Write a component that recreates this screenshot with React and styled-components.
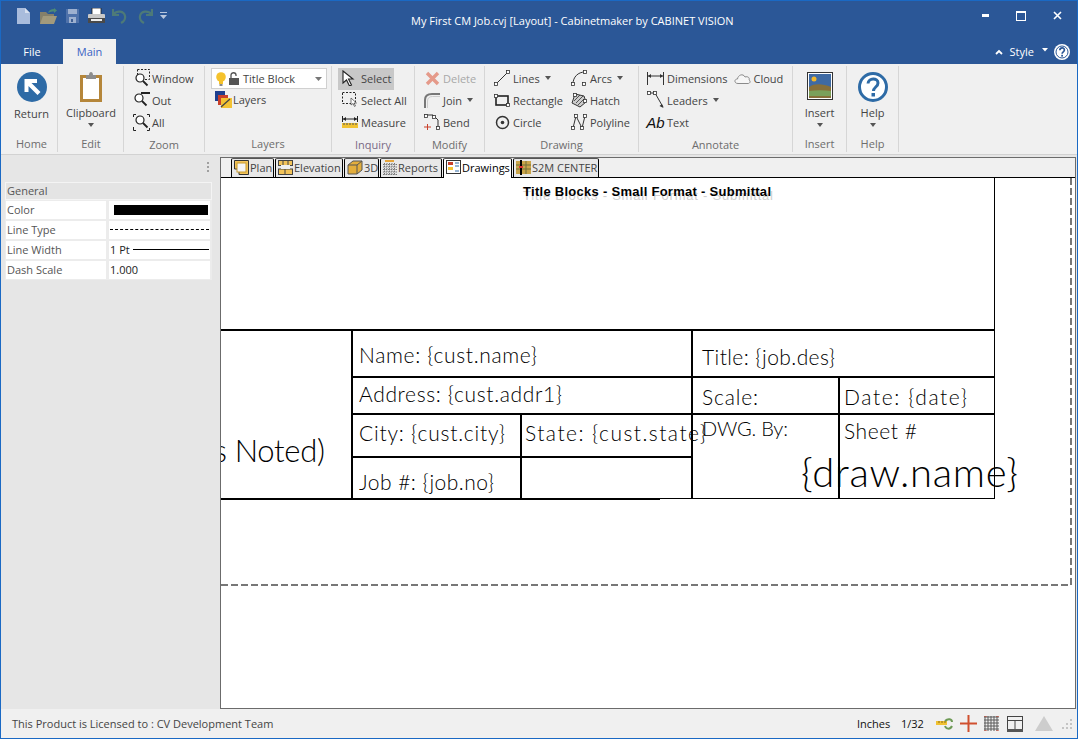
import styled, { createGlobalStyle } from "styled-components";

const GlobalStyle = createGlobalStyle`
 html, body {
  margin: 0;
  padding: 0;
  background: #f0f0f0;
 }
 * {
  box-sizing: border-box;
 }
`;

const BLUE = "#2b5797";
const ICON_BLUE = "#2e6ba6";

// ---- icons ----
const Svg = ({ w = 16, h = 16, children }) => (
 <svg width={w} height={h} viewBox={`0 0 ${w} ${h}`} fill="none" style={{ display: "block", flexShrink: 0 }}>
  {children}
 </svg>
);

const Lens = ({ x = 6, y = 10 }) => (
 <g>
  <circle cx={x} cy={y} r="4" stroke="#222" strokeWidth="1.2" fill="#fff" />
  <path d={`M${x + 3} ${y + 3}l4.5 4.5`} stroke="#222" strokeWidth="1.8" />
 </g>
);

const Node = ({ x, y }) => <rect x={x - 1.5} y={y - 1.5} width="3" height="3" fill="#fff" stroke="#333" strokeWidth="0.8" />;

const icons = {
 fileNew: (
  <Svg w={13} h={16}>
   <path d="M0 0h8l5 5v11H0z" fill="#a9bcdc" />
   <path d="M8 0l5 5H8z" fill="#d7e0ef" />
  </Svg>
 ),
 open: (
  <Svg w={17} h={16}>
   <path d="M0 4h6l2 2h6v10H0z" fill="#85806a" />
   <path d="M3 8h14l-3 8H0z" fill="#a29a7c" />
   <path d="M8 5c1-3 3-4 6-4v-1l3 2.500-3 2.500v-1.500c-2 0-4 0-6 1.500z" fill="#4d8a76" />
  </Svg>
 ),
 save: (
  <Svg w={13} h={14}>
   <rect width="13" height="14" fill="#4f72aa" />
   <rect x="2" y="0" width="9" height="5" fill="#9db0cf" />
   <rect x="3" y="8" width="7" height="6" fill="#9db0cf" />
   <rect x="5" y="10" width="2" height="3" fill="#3e5f94" />
  </Svg>
 ),
 print: (
  <Svg w={17} h={16}>
   <rect x="4" y="0" width="9" height="7" fill="#fff" stroke="#222" strokeWidth="0.8" />
   <rect x="0" y="6" width="17" height="7" rx="1" fill="#c8c8c8" />
   <rect x="0" y="10" width="17" height="5" fill="#4a4a4a" />
   <rect x="3" y="11" width="11" height="2" fill="#eee" />
  </Svg>
 ),
 undo: (
  <Svg w={15} h={16}>
   <path d="M1 1v6h6M1.500 6.500C5 2 12 3 13 8c.5 3-1 5.500-4 7" stroke="#4d7a78" strokeWidth="2.200" />
  </Svg>
 ),
 redo: (
  <Svg w={15} h={16}>
   <path d="M14 1v6H8M13.500 6.500C10 2 3 3 2 8c-.5 3 1 5.500 4 7" stroke="#4d7a78" strokeWidth="2.200" />
  </Svg>
 ),
 qatMenu: (
  <Svg w={7} h={8}>
   <path d="M0 0h7v1H0zM0 3h7L3.500 7z" fill="#b8c6dd" />
  </Svg>
 ),
 minimize: (
  <Svg w={7} h={3}>
   <rect width="7" height="3" fill="#fff" />
  </Svg>
 ),
 maximize: (
  <Svg w={10} h={10}>
   <rect x="0.500" y="0.500" width="9" height="9" stroke="#fff" />
   <rect y="0" width="10" height="2" fill="#fff" />
  </Svg>
 ),
 close: (
  <Svg w={9} h={9}>
   <path d="M1 1l7 7M8 1l-7 7" stroke="#fff" strokeWidth="1.600" />
  </Svg>
 ),
 chevronUp: (
  <Svg w={8} h={6}>
   <path d="M1 5l3-3 3 3" stroke="#fff" strokeWidth="1.800" />
  </Svg>
 ),
 caretWhite: (
  <Svg w={6} h={4}>
   <path d="M0 0h6L3 3.500z" fill="#fff" />
  </Svg>
 ),
 helpWhite: (
  <Svg w={16} h={16}>
   <circle cx="8" cy="8" r="8" fill="#fff" />
   <circle cx="8" cy="8" r="6" stroke={BLUE} strokeWidth="1" fill="#fff" />
   <path d="M5.800 6.200c.2-3 4.600-3 4.600-.2 0 1.800-2.300 1.800-2.300 3.700" stroke={BLUE} strokeWidth="1.700" />
   <rect x="7.200" y="10.800" width="1.800" height="1.800" fill={BLUE} />
  </Svg>
 ),
 returnArrow: (
  <Svg w={30} h={30}>
   <circle cx="15" cy="15" r="15" fill={ICON_BLUE} />
   <path d="M8 7h12v4h-5.500l9 9-3 3-9-9V20H7.500V7z" fill="#fff" />
  </Svg>
 ),
 clipboard: (
  <Svg w={22} h={30}>
   <rect y="3" width="22" height="27" fill="#b5863a" />
   <rect x="3" y="6" width="16" height="21" fill="#fff" />
   <path d="M6 7V3h3c0-4 4-4 4 0h3v4z" fill="#8d8d8d" />
  </Svg>
 ),
 zoomWindow: (
  <Svg w={16} h={18}>
   <rect x="3.500" y="0.500" width="12" height="10" stroke="#222" strokeDasharray="2 1.500" />
   <Lens y={9} />
  </Svg>
 ),
 zoomOut: (
  <Svg w={17} h={16}>
   <rect x="8" y="0" width="9" height="2" fill="#222" />
   <Lens y={6} />
  </Svg>
 ),
 zoomAll: (
  <Svg w={17} h={17}>
   <path d="M3 .5H.5V3M14 .5h2.500V3M.5 13v3.500H3M14 16.500h2.500V14" stroke="#222" />
   <Lens x={7} y={6} />
  </Svg>
 ),
 bulb: (
  <Svg w={10} h={14}>
   <circle cx="5" cy="5" r="4.800" fill="#f5c22c" />
   <rect x="3" y="9" width="4" height="3" fill="#f5c22c" />
   <rect x="3.500" y="12" width="3" height="2" fill="#8a8a8a" />
  </Svg>
 ),
 lock: (
  <Svg w={10} h={13}>
   <path d="M2 6V3c0-3 5-3 5 0v1" stroke="#555" strokeWidth="1.300" />
   <rect y="6" width="10" height="7" fill="#555" />
  </Svg>
 ),
 comboArrow: (
  <Svg w={7} h={4}>
   <path d="M0 0h7L3.500 4z" fill="#777" />
  </Svg>
 ),
 layers: (
  <Svg w={17} h={17}>
   <rect width="10" height="10" fill="#1f3f8f" />
   <rect x="3" y="4" width="10" height="10" fill="#c9402b" />
   <rect x="6" y="7" width="11" height="10" fill="#f3c233" />
   <path d="M6 16l9-8" stroke="#444" strokeWidth="1.400" />
  </Svg>
 ),
 select: (
  <Svg w={13} h={16}>
   <path d="M1 1l10 8H6.500l3 6-2 1-3-6L1 13z" fill="#fff" stroke="#222" strokeWidth="1.100" />
  </Svg>
 ),
 selectAll: (
  <Svg w={16} h={16}>
   <rect x="0.500" y="0.500" width="13" height="11" stroke="#222" strokeDasharray="2 1.500" />
   <path d="M9 6l5.500 5H12l1.500 3-1 .5-1.500-3L9 13z" fill="#fff" stroke="#555" strokeWidth="0.800" />
  </Svg>
 ),
 measure: (
  <Svg w={16} h={14}>
   <path d="M.5 1v6M15.500 1v6M1 4h14" stroke="#222" />
   <path d="M1 4l3-2v4zM15 4l-3-2v4z" fill="#222" />
   <rect y="8" width="16" height="5" fill="#f1c232" />
   <path d="M2 8v2M5 8v2M8 8v2M11 8v2M14 8v2" stroke="#555" />
  </Svg>
 ),
 deleteX: (
  <Svg w={15} h={15}>
   <path d="M2 2l11 11M13 2L2 13" stroke="#e59a8a" strokeWidth="3.400" />
  </Svg>
 ),
 join: (
  <Svg w={16} h={15}>
   <path d="M1 15V7C1 3 4 1 8 1h8" stroke="#777" strokeWidth="2" />
   <path d="M3.500 15V8c0-3 2-4.500 5-4.500H16" stroke="#ccc" strokeWidth="1" />
  </Svg>
 ),
 bend: (
  <Svg w={16} h={16}>
   <path d="M1 1h8l5 5 0 8" stroke="#333" />
   <Node x={2} y={2} />
   <Node x={10} y={3} />
   <Node x={14} y={14} />
   <path d="M0 13h7M3.500 10v6.500" stroke="#c9402b" />
  </Svg>
 ),
 lines: (
  <Svg w={16} h={16}>
   <path d="M2 14L14 2" stroke="#333" />
   <Node x={2} y={14} />
   <Node x={14} y={2} />
  </Svg>
 ),
 rectangle: (
  <Svg w={16} h={13}>
   <rect x="2" y="2" width="12" height="9" stroke="#222" strokeWidth="1.600" />
   <Node x={2} y={2} />
   <Node x={14} y={11} />
  </Svg>
 ),
 circle: (
  <Svg w={15} h={15}>
   <circle cx="7.500" cy="7.500" r="6" stroke="#333" strokeWidth="1.500" />
   <circle cx="7.500" cy="7.500" r="1.800" fill="#333" />
  </Svg>
 ),
 arcs: (
  <Svg w={16} h={16}>
   <path d="M2 14C2 7 7 2 14 2" stroke="#333" />
   <Node x={2} y={14} />
   <Node x={14} y={2} />
   <Node x={13} y={14} />
  </Svg>
 ),
 hatch: (
  <Svg w={16} h={15}>
   <path d="M4 1l9 2 2 6-6 5-8-4z" fill="#ccc" stroke="#333" />
   <path d="M3 8l6-6M5 10l7-7M7 12l6-6" stroke="#333" strokeWidth="0.800" />
   <Node x={4} y={2} />
   <Node x={14} y={8} />
  </Svg>
 ),
 polyline: (
  <Svg w={16} h={16}>
   <path d="M2 14L5 2l6 12 3-12" stroke="#333" />
   <Node x={2} y={14} />
   <Node x={5} y={2} />
   <Node x={11} y={14} />
   <Node x={14} y={2} />
  </Svg>
 ),
 dimensions: (
  <Svg w={17} h={13}>
   <path d="M.5 0v13M16.500 0v13M1 4h15" stroke="#333" />
   <path d="M1 4l3-2v4zM16 4l-3-2v4z" fill="#333" />
  </Svg>
 ),
 cloud: (
  <Svg w={17} h={11}>
   <path d="M4 10.500C0 10.500 0 6 3.500 6 4 2 9 0 11 4c3-1 5 1 4 3 2 1 1 3.500-1 3.500z" stroke="#8a8a8a" fill="#f6f6f6" />
  </Svg>
 ),
 leaders: (
  <Svg w={17} h={18}>
   <path d="M3 2h5l8 14" stroke="#333" />
   <path d="M16.500 17l-4-2 2.500-2z" fill="#333" />
   <Node x={2} y={2} />
   <Node x={8} y={2} />
  </Svg>
 ),
 picture: (
  <Svg w={26} h={28}>
   <rect x="0.500" y="0.500" width="25" height="27" fill="#fff" stroke="#333" />
   <rect x="2" y="2" width="22" height="24" fill="#3f6aa3" />
   <circle cx="7" cy="7" r="2.500" fill="#f2b72b" />
   <path d="M2 15c6-4 14-3 22 0v11H2z" fill="#87703a" />
   <path d="M2 19c7-1 15-1 22 0v5H2z" fill="#7aa05a" />
  </Svg>
 ),
 helpBig: (
  <Svg w={30} h={30}>
   <circle cx="15" cy="15" r="13.500" stroke={ICON_BLUE} strokeWidth="3" fill="#fff" />
   <path d="M10 11.500C10.500 5.500 20 5.500 20 11c0 4-4.500 4-4.500 8" stroke={ICON_BLUE} strokeWidth="3" />
   <rect x="13.500" y="21" width="3.500" height="3.500" fill={ICON_BLUE} />
  </Svg>
 ),
 tabPlan: (
  <Svg w={15} h={15}>
   <path d="M.5.500h14v14H5V9H.5z" stroke="#333" fill="#f3c45a" />
   <rect x="3" y="3" width="9" height="9" fill="#f5f5f5" stroke="#c89a2d" />
  </Svg>
 ),
 tabElevation: (
  <Svg w={15} h={15}>
   <rect x="0.500" y="0.500" width="14" height="5" fill="#f3c45a" stroke="#444" />
   <rect x="0.500" y="9" width="14" height="5.500" fill="#f3c45a" stroke="#444" />
   <rect x="3" y="5" width="9" height="4" fill="#f0f0f0" />
   <path d="M5 1v4M10 1v4M7 9v5" stroke="#444" />
  </Svg>
 ),
 tab3d: (
  <Svg w={16} h={15}>
   <path d="M1 5l5-4h9v9l-5 4H1z" fill="#e3ae3c" stroke="#555" />
   <path d="M1 5h9v9M10 5l5-4" stroke="#555" />
  </Svg>
 ),
 tabReports: (
  <Svg w={14} h={15}>
   <rect x="2" y="0" width="9" height="2" fill="#e5a43a" />
   <path d="M0 4.500h14M0 7h14M0 9.500h14M0 12h14M0 14.500h14M1.500 3v12M4 3v12M6.500 3v12M9 3v12M11.500 3v12" stroke="#777" strokeDasharray="1.500 1" />
  </Svg>
 ),
 tabDrawings: (
  <Svg w={15} h={14}>
   <rect x="0.500" y="0.500" width="14" height="13" fill="#fff" stroke="#333" />
   <rect x="2" y="2" width="5" height="3" fill="#c9402b" />
   <rect x="2" y="7" width="5" height="3" fill="#f3c233" />
   <path d="M9 3h4M9 6h4M9 11h4" stroke="#2e6ba6" />
  </Svg>
 ),
 tabS2m: (
  <Svg w={15} h={15}>
   <rect y="1" width="15" height="13" fill="#c9a44a" />
   <path d="M0 5h15M0 9h15M5 1v13M10 1v13" stroke="#6f6f3a" />
   <path d="M5 0v15" stroke="#000" strokeWidth="2" />
   <rect x="3" y="6" width="4" height="2" fill="#d33" />
  </Svg>
 ),
 ruler: (
  <Svg w={17} h={12}>
   <rect x="0" y="3" width="11" height="4" fill="#f1c232" />
   <path d="M3 3v2M6 3v2M9 3v2" stroke="#8a6d1a" />
   <path d="M9 3c3-3 7-2 7 1M16 8c-2 4-6 3-7 0" stroke="#6d9a55" strokeWidth="2" />
  </Svg>
 ),
 cross: (
  <Svg w={17} h={17}>
   <path d="M8.500 0v17M0 8.500h17" stroke="#d0502f" strokeWidth="2" />
  </Svg>
 ),
 grid: (
  <Svg w={15} h={15}>
   <path d="M1 0v15M4 0v15M7 0v15M10 0v15M13 0v15M0 1h15M0 4h15M0 7h15M0 10h15M0 13h15" stroke="#5a5a5a" />
   <path d="M0 0h3M12 0h3M0 15h3M12 15h3" stroke="#c9402b" />
  </Svg>
 ),
 split: (
  <Svg w={16} h={16}>
   <rect x="0.500" y="0.500" width="15" height="15" stroke="#444" />
   <path d="M0 4.500h16M8 4v9" stroke="#444" />
   <rect y="13" width="16" height="3" fill="#555" />
  </Svg>
 ),
 triangle: (
  <Svg w={18} h={15}>
   <path d="M9 0l9 15H0z" fill="#cdcdcd" />
  </Svg>
 ),
 resizeGrip: (
  <Svg w={11} h={11}>
   <path d="M8 1h2v2H8zM4 5h2v2H4zM8 5h2v2H8zM0 9h2v2H0zM4 9h2v2H4zM8 9h2v2H8z" fill="#c4c4c4" />
  </Svg>
 ),
};

// ---- window frame ----
const Window = styled.div`
 display: flex;
 flex-direction: column;
 width: 1078px;
 height: 739px;
 overflow: hidden;
 background: #e6e6e6;
 border: 1px solid #1a69c4;
 font-family: "Open Sans", "Noto Sans", sans-serif;
 font-size: 11px;
 color: #444;
`;

const Header = styled.header`
 background: ${BLUE};
 height: 63px;
 flex-shrink: 0;
`;

const TitleRow = styled.div`
 display: flex;
 align-items: center;
 height: 38px;
 padding: 0 2px 0 16px;
`;

const QuickAccess = styled.div`
 display: flex;
 align-items: center;
 width: 394px;
 padding-bottom: 8px;
`;

const QuickButton = styled.span`
 display: block;
 width: ${(p) => p.$w}px;
`;

const Title = styled.h1`
 margin: 0;
 font-size: 11px;
 font-weight: 400;
 color: #fff;
 white-space: nowrap;
 flex: 1;
`;

const WindowButtons = styled.div`
 display: flex;
 align-items: center;
 padding-bottom: 9px;
`;

const WindowButton = styled.span`
 display: flex;
 justify-content: center;
 width: 36px;
`;

const TabRow = styled.div`
 display: flex;
 align-items: flex-end;
 height: 25px;
`;

const FileTab = styled.div`
 width: 62px;
 height: 25px;
 line-height: 25px;
 text-align: center;
 color: #fff;
`;

const MainTab = styled.div`
 width: 53px;
 height: 25px;
 line-height: 26px;
 text-align: center;
 background: #f0f0f0;
 color: #3a62c4;
`;

const StyleMenu = styled.div`
 display: flex;
 align-items: center;
 margin-left: auto;
 height: 25px;
 color: #fff;
 padding-right: 7px;
`;

const StyleLabel = styled.span`
 margin: 0 8px 0 7px;
 padding-bottom: 1px;
`;

const CaretSlot = styled.span`
 margin: -4px 6px 0 0;
`;

// ---- ribbon ----
const Ribbon = styled.section`
 display: flex;
 height: 91px;
 flex-shrink: 0;
 padding: 2px 0 2px 1px;
 background: #f0f0f0;
 border-bottom: 1px solid #d2d2d2;
`;

const Group = styled.div`
 display: flex;
 flex-direction: column;
 width: ${(p) => p.$w}px;
 padding-left: ${(p) => p.$shift || 0}px;
 border-right: 1px solid #d6d6d6;
`;

const GroupBody = styled.div`
 display: flex;
 flex: 1;
 gap: ${(p) => p.$gap || 0}px;
 padding: 2px 0 0 ${(p) => p.$pad || 0}px;
`;

const GroupLabel = styled.div`
 height: 19px;
 line-height: 22px;
 text-align: center;
 color: ${(p) => (p.$tint ? "#7a6a86" : "#6d6d6d")};
`;

const BigButton = styled.div`
 display: flex;
 flex-direction: column;
 align-items: center;
 width: 100%;
 padding-top: 4px;
`;

const BigLabel = styled.span`
 margin-top: ${(p) => p.$top || 4}px;
 line-height: 15px;
`;

const BigCaret = styled.span`
 margin-top: 3px;
 width: 0;
 height: 0;
 border: 3px solid transparent;
 border-top: 4px solid #555;
 border-bottom: 0;
`;

const Column = styled.div`
 display: flex;
 flex-direction: column;
`;

const SmallButton = styled.div`
 display: flex;
 align-items: center;
 width: ${(p) => (p.$active ? "56px" : "auto")};
 height: 22px;
 padding: 0 0 2px 4px;
 background: ${(p) => (p.$active ? "#c8c8c8" : "transparent")};
 white-space: nowrap;
 color: ${(p) => (p.$disabled ? "#a8a8a8" : "#444")};
`;

const IconSlot = styled.span`
 display: flex;
 justify-content: center;
 width: ${(p) => p.$w || 16}px;
 margin-right: ${(p) => p.$gap || 3}px;
`;

const SmallCaret = styled.span`
 margin-left: 5px;
 width: 0;
 height: 0;
 border: 3px solid transparent;
 border-top: 4px solid #555;
 border-bottom: 0;
`;

const Combo = styled.div`
 display: flex;
 align-items: center;
 gap: 3px;
 width: 116px;
 height: 21px;
 padding: 0 4px;
 background: #fff;
 border: 1px solid #d0d0d0;
`;

const ComboText = styled.span`
 flex: 1;
 margin-left: 1px;
`;

const AbMark = styled.span`
 font-family: "Liberation Sans", Arial, sans-serif;
 font-style: italic;
 font-size: 15px;
 color: #111;
 line-height: 1;
`;

// ---- main area ----
const Main = styled.main`
 display: flex;
 flex: 1;
 min-height: 0;
`;

const Panel = styled.aside`
 width: 219px;
 flex-shrink: 0;
 padding: 7px 6px 0 4px;
`;

const Grip = styled.div`
 width: 2px;
 height: 10px;
 margin: 0 0 10px 202px;
 background: repeating-linear-gradient(#a0a0a0 0 2px, transparent 2px 4px);
`;

const PropGrid = styled.div`
 display: grid;
 grid-template-columns: 103px 104px;
 grid-template-rows: 18px;
 grid-auto-rows: 20px;
`;

const PropHead = styled.div`
 grid-column: 1 / 3;
 line-height: 16px;
 padding-left: 1px;
 background: #e4e4e4;
 border: 1px solid #f4f4f4;
 color: #555;
`;

const PropCell = styled.div`
 display: flex;
 align-items: center;
 padding: 0 0 1px 1px;
 background: #fff;
 border: 1px solid #ececec;
 border-right-width: 2px;
 color: ${(p) => (p.$value ? "#222" : "#555")};
 white-space: nowrap;
`;

const Swatch = styled.div`
 width: 94px;
 height: 10px;
 margin: 1px 0 0 4px;
 background: #000;
`;

const DashLine = styled.div`
 width: 100%;
 margin-right: 1px;
 border-top: 1px dashed #000;
`;

const SolidLine = styled.div`
 flex: 1;
 margin: 0 1px 0 3px;
 border-top: 1px solid #000;
`;

const Canvas = styled.div`
 display: flex;
 flex-direction: column;
 width: 856px;
 margin-top: 2px;
 background: #fff;
 border: 1px solid #6b6b6b;
`;

const TabStrip = styled.div`
 display: flex;
 gap: 1px;
 height: 20px;
 flex-shrink: 0;
 padding-left: 10px;
 background: #f0f0f0;
 border-bottom: 1px solid #000;
`;

const SheetTab = styled.div`
 display: flex;
 align-items: center;
 gap: 1px;
 width: ${(p) => p.$w}px;
 height: ${(p) => (p.$active ? 20 : 19)}px;
 padding: 0 0 ${(p) => (p.$active ? 3 : 2)}px 2px;
 background: ${(p) => (p.$active ? "#fff" : "#e8e8e8")};
 border: 1px solid #000;
 border-top-color: #555;
 border-bottom: 0;
 border-radius: 2px 2px 0 0;
 color: ${(p) => (p.$active ? "#000" : "#444")};
 white-space: nowrap;
`;

const DrawingSheet = styled.svg`
 display: block;
 flex: 1;
 width: 100%;
 min-height: 0;
`;

const Hand = styled.text`
 font-family: "Lato", "Open Sans", sans-serif;
 font-weight: 300;
 font-size: ${(p) => p.$size}px;
 fill: #000;
`;

const SheetTitle = styled.text`
 font-family: "Liberation Sans", Arial, sans-serif;
 font-size: 13px;
 font-weight: ${(p) => (p.$ghost ? 400 : 700)};
 fill: ${(p) => (p.$ghost ? "#cfcfcf" : "#000")};
`;

// ---- status bar ----
const StatusBar = styled.footer`
 display: flex;
 align-items: center;
 height: 29px;
 flex-shrink: 0;
 padding-left: 11px;
 background: #f0f0f0;
`;

const StatusText = styled.span`
 color: ${(p) => (p.$dark ? "#111" : "#444")};
 width: ${(p) => (p.$w ? `${p.$w}px` : "auto")};
`;

const StatusRight = styled.div`
 display: flex;
 align-items: center;
 margin-left: auto;
 padding-right: 4px;
`;

const StatusIcon = styled.span`
 display: block;
 width: ${(p) => p.$w}px;
`;

// ---- data ----
const quickItems = [
 ["fileNew", 23], ["open", 26], ["save", 22], ["print", 24],
 ["undo", 26], ["redo", 22], ["qatMenu", 8],
];

const zoomItems = [["zoomWindow", "Window"], ["zoomOut", "Out"], ["zoomAll", "All"]];
const annotateItems = [["dimensions", "Dimensions"], ["leaders", "Leaders", true], ["textAb", "Text"]];

const sheetTabs = [
 ["tabPlan", "Plan", 43], ["tabElevation", "Elevation", 68], ["tab3d", "3D", 35],
 ["tabReports", "Reports", 62], ["tabDrawings", "Drawings", 69, true], ["tabS2m", "S2M CENTER", 86],
];

// lines are in page coordinates, the sheet's viewBox starts at its page origin
const thick = [
 [221, 330, 995, 330], [352, 330, 352, 499], [352, 377, 995, 377], [352, 414, 995, 414],
 [521, 414, 521, 499], [352, 457, 692, 457], [692, 330, 692, 499], [839, 377, 839, 499],
 [221, 499, 660, 499],
];
const thin = [[994.5, 178, 994.5, 499], [660, 498.5, 995, 498.5]];

const labels = [
 ["Name: {cust.name}", 359, 363, 178, 21],
 ["Address: {cust.addr1}", 359, 402, 203, 21],
 ["City: {cust.city}", 359, 441, 146, 21],
 ["State: {cust.state}", 525, 441, 181, 21],
 ["Job #: {job.no}", 359, 490, 135, 21],
 ["Title: {job.des}", 702, 365, 133, 21],
 ["Scale:", 702, 405, 56, 21],
 ["Date:  {date}", 844, 405, 123, 21],
 ["DWG. By:", 702, 436, 86, 20],
 ["Sheet #", 844, 439, 73, 21],
 ["{draw.name}", 801, 487, 217, 40],
 ["(As Noted)", 186, 462, 139, 31],
];

const App = () => (
 <Window>
  <GlobalStyle />
  <Header>
   <TitleRow>
    <QuickAccess>
     {quickItems.map(([name, w]) => (
      <QuickButton key={name} $w={w}>{icons[name]}</QuickButton>
     ))}
    </QuickAccess>
    <Title>My First CM Job.cvj [Layout] - Cabinetmaker by CABINET VISION</Title>
    <WindowButtons>
     <WindowButton>{icons.minimize}</WindowButton>
     <WindowButton>{icons.maximize}</WindowButton>
     <WindowButton>{icons.close}</WindowButton>
    </WindowButtons>
   </TitleRow>
   <TabRow>
    <FileTab>File</FileTab>
    <MainTab>Main</MainTab>
    <StyleMenu>
     {icons.chevronUp}
     <StyleLabel>Style</StyleLabel>
     <CaretSlot>{icons.caretWhite}</CaretSlot>
     {icons.helpWhite}
    </StyleMenu>
   </TabRow>
  </Header>

  <Ribbon>
   <Group $w={56} $shift={4}>
    <GroupBody>
     <BigButton>
      {icons.returnArrow}
      <BigLabel $top={4}>Return</BigLabel>
     </BigButton>
    </GroupBody>
    <GroupLabel>Home</GroupLabel>
   </Group>
   <Group $w={66} $shift={1}>
    <GroupBody>
     <BigButton>
      {icons.clipboard}
      <BigLabel $top={3}>Clipboard</BigLabel>
      <BigCaret />
     </BigButton>
    </GroupBody>
    <GroupLabel>Edit</GroupLabel>
   </Group>
   <Group $w={81}>
    <GroupBody $pad={5}>
     <Column>
      {zoomItems.map(([icon, text]) => (
       <SmallButton key={text}>
        <IconSlot $w={17} $gap={2}>{icons[icon]}</IconSlot>
        {text}
       </SmallButton>
      ))}
     </Column>
    </GroupBody>
    <GroupLabel>Zoom</GroupLabel>
   </Group>
   <Group $w={127}>
    <GroupBody $pad={6}>
     <Column>
      <Combo>
       {icons.bulb}
       {icons.lock}
       <ComboText>Title Block</ComboText>
       {icons.comboArrow}
      </Combo>
      <SmallButton>
       <IconSlot $w={17} $gap={1}>{icons.layers}</IconSlot>
       Layers
      </SmallButton>
     </Column>
    </GroupBody>
    <GroupLabel>Layers</GroupLabel>
   </Group>
   <Group $w={83}>
    <GroupBody $pad={6}>
     <Column>
      <SmallButton $active>
       <IconSlot $w={13} $gap={6}>{icons.select}</IconSlot>
       Select
      </SmallButton>
      <SmallButton>
       <IconSlot $w={16} $gap={3}>{icons.selectAll}</IconSlot>
       Select All
      </SmallButton>
      <SmallButton>
       <IconSlot $w={16} $gap={3}>{icons.measure}</IconSlot>
       Measure
      </SmallButton>
     </Column>
    </GroupBody>
    <GroupLabel $tint>Inquiry</GroupLabel>
   </Group>
   <Group $w={70}>
    <GroupBody $pad={5}>
     <Column>
      <SmallButton $disabled>
       <IconSlot>{icons.deleteX}</IconSlot>
       Delete
      </SmallButton>
      <SmallButton>
       <IconSlot>{icons.join}</IconSlot>
       Join
       <SmallCaret />
      </SmallButton>
      <SmallButton>
       <IconSlot>{icons.bend}</IconSlot>
       Bend
      </SmallButton>
     </Column>
    </GroupBody>
    <GroupLabel>Modify</GroupLabel>
   </Group>
   <Group $w={154}>
    <GroupBody $pad={5} $gap={4}>
     <Column>
      <SmallButton>
       <IconSlot>{icons.lines}</IconSlot>
       Lines
       <SmallCaret />
      </SmallButton>
      <SmallButton>
       <IconSlot>{icons.rectangle}</IconSlot>
       Rectangle
      </SmallButton>
      <SmallButton>
       <IconSlot>{icons.circle}</IconSlot>
       Circle
      </SmallButton>
     </Column>
     <Column>
      <SmallButton>
       <IconSlot>{icons.arcs}</IconSlot>
       Arcs
       <SmallCaret />
      </SmallButton>
      <SmallButton>
       <IconSlot>{icons.hatch}</IconSlot>
       Hatch
      </SmallButton>
      <SmallButton>
       <IconSlot>{icons.polyline}</IconSlot>
       Polyline
      </SmallButton>
     </Column>
    </GroupBody>
    <GroupLabel>Drawing</GroupLabel>
   </Group>
   <Group $w={154}>
    <GroupBody $pad={4} $gap={2}>
     <Column>
      {annotateItems.map(([icon, text, caret]) => (
       <SmallButton key={text}>
        <IconSlot $w={17}>
         {icons[icon] || <AbMark>Ab</AbMark>}
        </IconSlot>
        {text}
        {caret && <SmallCaret />}
       </SmallButton>
      ))}
     </Column>
     <Column>
      <SmallButton>
       <IconSlot $w={17}>{icons.cloud}</IconSlot>
       Cloud
      </SmallButton>
     </Column>
    </GroupBody>
    <GroupLabel>Annotate</GroupLabel>
   </Group>
   <Group $w={54}>
    <GroupBody>
     <BigButton>
      {icons.picture}
      <BigLabel $top={5}>Insert</BigLabel>
      <BigCaret />
     </BigButton>
    </GroupBody>
    <GroupLabel>Insert</GroupLabel>
   </Group>
   <Group $w={52}>
    <GroupBody>
     <BigButton>
      {icons.helpBig}
      <BigLabel $top={3}>Help</BigLabel>
      <BigCaret />
     </BigButton>
    </GroupBody>
    <GroupLabel>Help</GroupLabel>
   </Group>
  </Ribbon>

  <Main>
   <Panel>
    <Grip />
    <PropGrid>
     <PropHead>General</PropHead>
     <PropCell>Color</PropCell>
     <PropCell $value><Swatch /></PropCell>
     <PropCell>Line Type</PropCell>
     <PropCell $value><DashLine /></PropCell>
     <PropCell>Line Width</PropCell>
     <PropCell $value>1 Pt<SolidLine /></PropCell>
     <PropCell>Dash Scale</PropCell>
     <PropCell $value>1.000</PropCell>
    </PropGrid>
   </Panel>
   <Canvas>
    <TabStrip>
     {sheetTabs.map(([icon, text, w, active]) => (
      <SheetTab key={text} $w={w} $active={active}>
       {icons[icon]}
       {text}
      </SheetTab>
     ))}
    </TabStrip>
    <DrawingSheet viewBox="221 178 854 530">
     <SheetTitle $ghost x="523" y="200" textLength="250">Title Blocks - Small Format - Submittal</SheetTitle>
     <SheetTitle x="523" y="196" textLength="248">Title Blocks - Small Format - Submittal</SheetTitle>
     {thin.map(([x1, y1, x2, y2]) => (
      <line key={`${x1}-${y1}`} x1={x1} y1={y1} x2={x2} y2={y2} stroke="#000" shapeRendering="crispEdges" />
     ))}
     {thick.map(([x1, y1, x2, y2]) => (
      <line key={`${x1}-${y1}-${x2}`} x1={x1} y1={y1} x2={x2} y2={y2} stroke="#000" strokeWidth="2" shapeRendering="crispEdges" />
     ))}
     {labels.map(([text, x, y, w, size]) => (
      <Hand key={text} x={x} y={y} textLength={w} $size={size}>{text}</Hand>
     ))}
     <path d="M221 585H1071V178" fill="none" stroke="#777" strokeWidth="2" strokeDasharray="7 3" shapeRendering="crispEdges" />
    </DrawingSheet>
   </Canvas>
  </Main>

  <StatusBar>
   <StatusText>This Product is Licensed to : CV Development Team</StatusText>
   <StatusRight>
    <StatusText $dark $w={44}>Inches</StatusText>
    <StatusText $dark $w={35}>1/32</StatusText>
    <StatusIcon $w={24}>{icons.ruler}</StatusIcon>
    <StatusIcon $w={24}>{icons.cross}</StatusIcon>
    <StatusIcon $w={23}>{icons.grid}</StatusIcon>
    <StatusIcon $w={28}>{icons.split}</StatusIcon>
    <StatusIcon $w={27}>{icons.triangle}</StatusIcon>
    <StatusIcon $w={11}>{icons.resizeGrip}</StatusIcon>
   </StatusRight>
  </StatusBar>
 </Window>
);

export default App;
